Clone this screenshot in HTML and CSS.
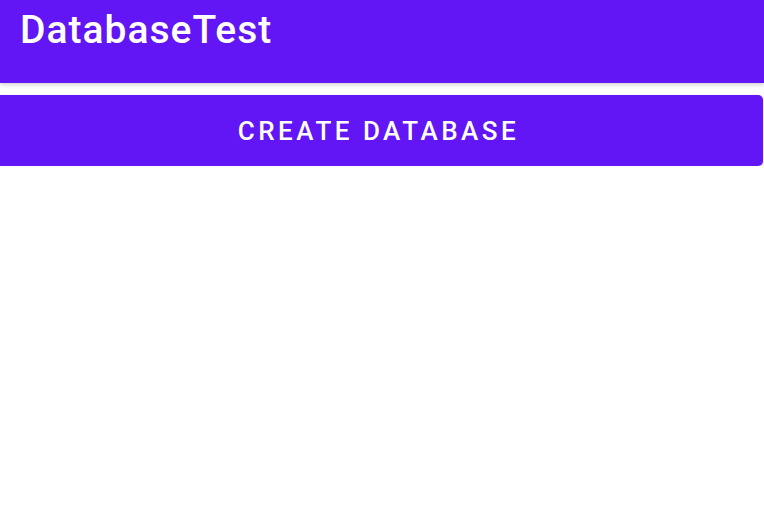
FILE: index.html
```html
<!DOCTYPE html>
<html>
<head>
<meta charset="utf-8">
<link rel="stylesheet" href="styles.css">
</head>
<body>
<header class="appbar">
  <h1 class="title">DatabaseTest</h1>
</header>
<main class="content">
  <button class="btn">CREATE DATABASE</button>
</main>
</body>
</html>
```
FILE: styles.css
```css
html, body {
  margin: 0;
  padding: 0;
  background: #ffffff;
  font-family: Roboto, "Noto Sans", sans-serif;
  overflow: hidden;
}
.appbar {
  height: 83px;
  background: #6215f5;
  box-shadow: 0 2px 4px rgba(0,0,0,0.18);
  display: flex;
  align-items: flex-start;
  padding-left: 20px;
  box-sizing: border-box;
  position: relative;
  z-index: 1;
}
.title {
  margin: 0;
  padding-top: 8px;
  color: #ffffff;
  font-size: 39px;
  font-weight: 500;
  line-height: 44px;
  letter-spacing: 1px;
}
.content {
  background: #ffffff;
  padding-top: 12px;
  display: flex;
}
.btn {
  margin-left: -10px;
  width: 773px;
  height: 71px;
  border: none;
  border-radius: 5px;
  background: #6215f5;
  color: #ffffff;
  font-family: Roboto, "Noto Sans", sans-serif;
  font-size: 26px;
  font-weight: 500;
  letter-spacing: 3.5px;
  box-shadow: 0 1px 3px rgba(0,0,0,0.25);
  padding: 0 0 0 4px;
}
```
